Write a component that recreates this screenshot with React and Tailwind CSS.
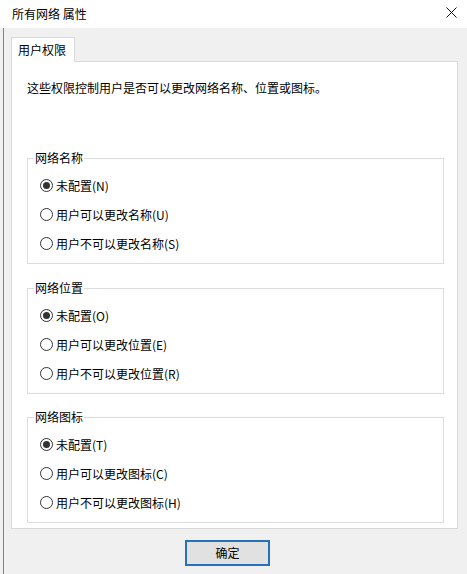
import React from "react";

const groups = [
  {
    title: "网络名称",
    options: ["未配置(N)", "用户可以更改名称(U)", "用户不可以更改名称(S)"],
  },
  {
    title: "网络位置",
    options: ["未配置(O)", "用户可以更改位置(E)", "用户不可以更改位置(R)"],
  },
  {
    title: "网络图标",
    options: ["未配置(T)", "用户可以更改图标(C)", "用户不可以更改图标(H)"],
  },
];

// Win10 style radio button
const Radio = ({ checked, label }) => (
  <div className="flex items-center h-[29px]">
    <span className="w-[13px] h-[13px] rounded-full border border-[#333] bg-white flex items-center justify-center">
      {checked && <span className="w-[7px] h-[7px] rounded-full bg-[#333]" />}
    </span>
    <span className="ml-[3px] text-[12px] leading-[16px] text-black">{label}</span>
  </div>
);

const GroupBox = ({ title, options, className }) => (
  <fieldset className={"border border-[#dcdcdc] " + className}>
    <legend className="ml-[6px] px-[1px] text-[12px] leading-[16px] text-black">{title}</legend>
    <div className="pl-[12px] pt-[5px] pb-[5px]">
      {options.map((o, i) => (
        <Radio key={o} label={o} checked={i === 0} />
      ))}
    </div>
  </fieldset>
);

const App = () => {
  return (
    <div
      className="w-[467px] h-[574px] bg-[#f0f0f0] overflow-hidden flex flex-col"
      style={{ fontFamily: '"Microsoft YaHei", "Noto Sans CJK SC", sans-serif' }}
    >
      {/* Title bar */}
      <div className="h-[28px] bg-white flex items-center justify-between pl-[12px] pr-[10px] shrink-0">
        <span className="text-[12px] leading-[16px] text-black">所有网络 属性</span>
        <svg width="11" height="11" viewBox="0 0 11 11" className="mb-[3px]">
          <path d="M0.5 0.5 L10.5 10.5 M10.5 0.5 L0.5 10.5" stroke="#111" strokeWidth="1" />
        </svg>
      </div>

      {/* Body */}
      <div className="flex-1 ml-[3px] border-l border-[#4a8fd6] pl-[7px] pr-[9px] pt-[9px]">
        {/* Tab */}
        <div className="relative z-10 -mb-px w-[64px] h-[25px] bg-white border border-b-0 border-[#d9d9d9] pl-[6px] flex items-center">
          <span className="text-[12px] leading-[16px] text-black">用户权限</span>
        </div>

        {/* Tab panel */}
        <div className="bg-white border border-[#d9d9d9] pt-[18px] pl-[15px] pr-[13px] pb-[5px]">
          <p className="text-[12px] leading-[16px] text-black">
            这些权限控制用户是否可以更改网络名称、位置或图标。
          </p>
          <GroupBox {...groups[0]} className="mt-[54px]" />
          <GroupBox {...groups[1]} className="mt-[16px]" />
          <GroupBox {...groups[2]} className="mt-[15px]" />
        </div>

        {/* Buttons */}
        <div className="mt-[11px] pl-[174px]">
          <button className="w-[85px] h-[26px] bg-[#e1e1e1] border-2 border-[#2672b8] text-[12px] leading-[16px] text-black flex items-center justify-center">
            确定
          </button>
        </div>
      </div>
    </div>
  );
};

export default App;
